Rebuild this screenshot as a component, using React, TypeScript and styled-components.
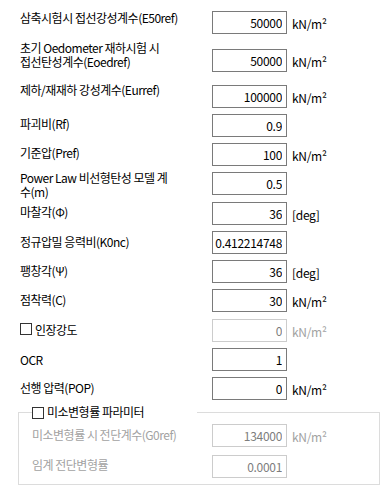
import React from "react";
import styled, { createGlobalStyle } from "styled-components";

const GlobalStyle = createGlobalStyle`
  html, body {
    margin: 0;
    padding: 0;
    background: #ffffff;
  }
  body {
    font-family: "Noto Sans CJK KR", "Noto Sans", sans-serif;
    font-size: 12px;
    color: #000000;
  }
`;

const Form = styled.div`
  width: 381px;
  height: 494px;
  box-sizing: border-box;
  padding: 11px 0 0 20px;
  overflow: hidden;
`;

const Row = styled.div<{ $h: number }>`
  display: flex;
  align-items: flex-start;
  height: ${(p) => p.$h}px;
`;

const Label = styled.div<{ $top: number; $w?: number; $off?: boolean }>`
  width: ${(p) => p.$w ?? 192}px;
  flex-shrink: 0;
  padding-top: ${(p) => p.$top}px;
  line-height: 14px;
  letter-spacing: -0.5px;
  color: ${(p) => (p.$off ? "#a2a2a2" : "#000000")};
  white-space: pre-line;
  display: flex;
  align-items: flex-start;
`;

const Box = styled.input<{ $top?: number; $off?: boolean }>`
  width: 75px;
  height: 23px;
  box-sizing: border-box;
  margin: ${(p) => p.$top ?? 0}px 0 0 0;
  border: 1px solid ${(p) => (p.$off ? "#cccccc" : "#7a7a7a")};
  padding: 0 4px 1px 2px;
  background: #ffffff;
  font-family: "Noto Sans CJK KR", "Noto Sans", sans-serif;
  font-size: 12px;
  letter-spacing: -0.3px;
  text-align: right;
  color: ${(p) => (p.$off ? "#7d7d7d" : "#000000")};
  outline: none;
  border-radius: 0;
  flex-shrink: 0;
`;

const Unit = styled.span<{ $top?: number; $off?: boolean }>`
  margin: ${(p) => (p.$top ?? 0) + 6}px 0 0 5px;
  line-height: 14px;
  letter-spacing: -0.3px;
  color: ${(p) => (p.$off ? "#a2a2a2" : "#000000")};
`;

const Check = styled.span`
  width: 12px;
  height: 12px;
  box-sizing: border-box;
  border: 1px solid #333333;
  background: #ffffff;
  margin-right: 3px;
  flex-shrink: 0;
`;

const Group = styled.fieldset`
  margin: 0 0 0 -2px;
  width: 362px;
  box-sizing: border-box;
  border: 1px solid #dcdcdc;
  padding: 5px 0 6px 13px;
`;

const Legend = styled.legend`
  width: 165px;
  padding: 0;
  margin: 0;
  height: 14px;
  line-height: 14px;
  letter-spacing: -0.5px;
  display: flex;
  align-items: flex-start;
`;

const LegendCheck = styled(Check)`
  margin-top: 2px;
`;

type Field = {
  label: string;
  value: string;
  unit?: string;
  h: number;
  lt: number;
  it?: number;
  check?: boolean;
  off?: boolean;
};

const KN = "kN/m²";

const fields: Field[] = [
  { label: "삼축시험시 접선강성계수(E50ref)", value: "50000", unit: KN, h: 30, lt: 0 },
  { label: "초기 Oedometer 재하시험 시\n접선탄성계수(Eoedref)", value: "50000", unit: KN, h: 42, lt: 0, it: 8 },
  { label: "제하/재재하 강성계수(Eurref)", value: "100000", unit: KN, h: 31, lt: 0, it: 2 },
  { label: "파괴비(Rf)", value: "0.9", h: 29, lt: 3 },
  { label: "기준압(Pref)", value: "100", unit: KN, h: 28, lt: 3 },
  { label: "Power Law 비선형탄성 모델 계\n수(m)", value: "0.5", h: 31, lt: 0, it: 1 },
  { label: "마찰각(Φ)", value: "36", unit: "[deg]", h: 29, lt: 3 },
  { label: "정규압밀 응력비(K0nc)", value: "0.412214748", h: 29, lt: 4 },
  { label: "팽창각(Ψ)", value: "36", unit: "[deg]", h: 29, lt: 4 },
  { label: "점착력(C)", value: "30", unit: KN, h: 30, lt: 4 },
  { label: "인장강도", value: "0", unit: KN, h: 29, lt: 4, check: true, off: true },
  { label: "OCR", value: "1", h: 29, lt: 5 },
  { label: "선행 압력(POP)", value: "0", unit: KN, h: 28, lt: 4 },
];

const smallStrain: Field[] = [
  { label: "미소변형률 시 전단계수(G0ref)", value: "134000", unit: KN, h: 31, lt: 4, off: true },
  { label: "임계 전단변형률", value: "0.0001", h: 23, lt: 3, off: true },
];

const App: React.FC = () => {
  return (
    <>
      <GlobalStyle />
      <Form>
        {fields.map((f) => (
          <Row key={f.label} $h={f.h}>
            <Label $top={f.lt}>
              {f.check && <Check />}
              {f.label}
            </Label>
            <Box readOnly defaultValue={f.value} $top={f.it} $off={f.off} />
            {f.unit && (
              <Unit $top={f.it} $off={f.off}>
                {f.unit}
              </Unit>
            )}
          </Row>
        ))}
        <Group>
          <Legend>
            <LegendCheck />
            미소변형률 파라미터
          </Legend>
          {smallStrain.map((f) => (
            <Row key={f.label} $h={f.h}>
              <Label $top={f.lt} $w={180} $off>
                {f.label}
              </Label>
              <Box readOnly defaultValue={f.value} $off />
              {f.unit && <Unit $off>{f.unit}</Unit>}
            </Row>
          ))}
        </Group>
      </Form>
    </>
  );
};

export default App;
